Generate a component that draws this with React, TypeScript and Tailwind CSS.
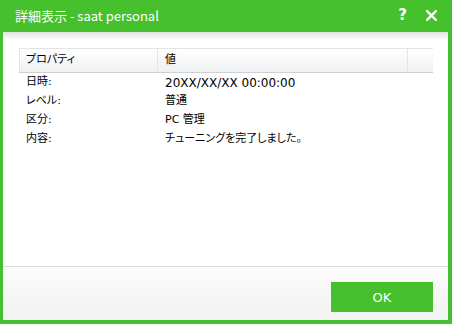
import React from "react";

const rows: [string, string, boolean][] = [
  ["日時:", "20XX/XX/XX 00:00:00", true],
  ["レベル:", "普通", false],
  ["区分:", "PC 管理", false],
  ["内容:", "チューニングを完了しました。", false],
];

const font = { fontFamily: '"DejaVu Sans", "Noto Sans CJK JP", sans-serif' };

export default function App() {
  return (
    <div
      className="w-[452px] h-[324px] bg-[#46c02d] flex flex-col pl-[3px] pr-[4px] pb-[4px] overflow-hidden [font-feature-settings:'palt']"
      style={font}
    >
      <div className="h-[32px] shrink-0 flex items-center pl-[12px] pr-[11px] text-white">
        <div
          className="text-[13px] leading-none flex-1 -mt-[1px]"
          style={{ fontFamily: '"Noto Sans CJK JP", sans-serif' }}
        >
          詳細表示 - saat personal
        </div>
        <div className="text-[15px] font-bold leading-none mr-[19px] -mt-[2px]">?</div>
        <svg width="11" height="11" viewBox="0 0 11 11" className="-mt-[2px]">
          <path d="M1 1 L10 10 M10 1 L1 10" stroke="white" strokeWidth="2.4" strokeLinecap="square" />
        </svg>
      </div>
      <div className="flex-1 flex flex-col bg-white">
        <div className="h-[8px] shrink-0 bg-gradient-to-b from-[#e2e2e2] to-white" />
        <div className="flex-1 pt-[8px] pl-[16px] pr-[15px]">
          <div className="border-t border-[#e3e3e3]">
            <div className="flex h-[24px] bg-gradient-to-b from-white to-[#eff0f2] border-b border-[#cfd0d2] text-[11px] text-black">
              <div className="w-[139px] border-l border-r border-[#e3e4e6] pl-[6px] flex items-center">プロパティ</div>
              <div className="w-[250px] border-r border-[#e3e4e6] pl-[7px] flex items-center">値</div>
              <div className="flex-1" />
            </div>
            {rows.map(([k, v, wide]) => (
              <div key={k} className="flex h-[19px] items-center text-[11px] text-black">
                <div className="w-[139px] pl-[7px]">{k}</div>
                <div className={wide ? "pl-[7px] text-[12px]" : "pl-[7px]"}>{v}</div>
              </div>
            ))}
          </div>
        </div>
        <div className="h-[54px] shrink-0 border-t border-[#dcdcdc] bg-gradient-to-b from-[#fbfbfb] to-[#f2f2f2] flex justify-end pt-[15px] pr-[15px]">
          <button className="w-[102px] h-[30px] bg-[#46c02d] text-white text-[13px] leading-none flex items-center justify-center">
            OK
          </button>
        </div>
      </div>
    </div>
  );
}
